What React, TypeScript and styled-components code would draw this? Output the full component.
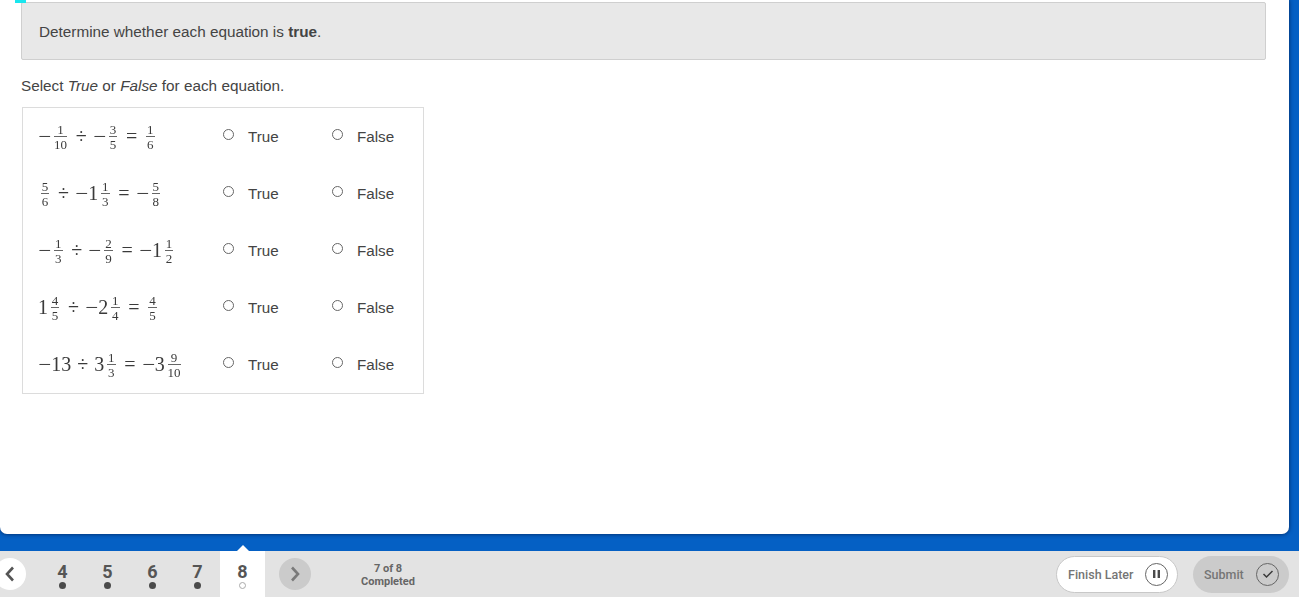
import React from "react";
import styled, { createGlobalStyle } from "styled-components";

const Global = createGlobalStyle`
  html, body { margin: 0; padding: 0; height: 100%; overflow: hidden; }
  body { font-family: "Liberation Sans", Arial, sans-serif; color: #444; background: #0560c4; }
  #root { height: 100%; }
`;

const Page = styled.div`
  width: 1299px;
  height: 597px;
  display: flex;
  flex-direction: column;
  position: relative;
  overflow: hidden;
  background: #0560c4;
`;

const Main = styled.main`
  width: 1289px;
  height: 534px;
  box-sizing: border-box;
  padding: 2px 23px 0 21px;
  background: #fff;
  border-radius: 0 0 7px 7px;
  box-shadow: 0 0 4px rgba(0, 25, 70, 0.85);
  flex: none;
`;

const FocusMark = styled.div`
  position: absolute;
  left: 15px;
  top: 0;
  width: 11px;
  height: 3px;
  background: #19e6ee;
`;

const Prompt = styled.div`
  height: 58px;
  box-sizing: border-box;
  display: flex;
  align-items: center;
  padding: 1px 17px 0;
  background: #e8e8e8;
  border: 1px solid #cfcfcf;
  border-radius: 2px;
  font-size: 15.3px;
  color: #444;
  white-space: pre;
`;

const Instruction = styled.p`
  margin: 16px 0 12px;
  height: 19px;
  line-height: 19px;
  font-size: 15.3px;
  color: #444;
`;

const Table = styled.div`
  margin-left: 1px;
  width: 402px;
  box-sizing: border-box;
  border: 1px solid #dcdcdc;
`;

const Row = styled.div`
  display: grid;
  grid-template-columns: 200px 109px 1fr;
  height: 57px;
  align-items: center;
`;

const MathCell = styled.div`
  padding-left: 15px;
  display: flex;
  align-items: center;
  font-family: "Liberation Serif", "Times New Roman", serif;
  font-size: 20px;
  color: #3a3a3a;
  white-space: pre;
  will-change: opacity;
`;

const Minus = styled.span`
  display: inline-block;
  transform: scaleX(1.15);
  margin: 0 1px;
`;

const Op = styled.span`
  margin: 0 6px;
`;

const Frac = styled.span`
  display: inline-flex;
  flex-direction: column;
  align-items: center;
  font-size: 13px;
  line-height: 13px;
  margin: 0 2.75px;
  min-width: 8px;
`;

const Num = styled.span`
  display: block;
  padding: 0 1px 0;
  border-bottom: 1px solid #666;
  text-align: center;
  align-self: stretch;
`;

const Den = styled.span`
  display: block;
  padding-top: 1px;
  text-align: center;
`;

const Choice = styled.label`
  display: flex;
  align-items: center;
  font-size: 15.2px;
  color: #444;
`;

const Radio = styled.span`
  width: 11px;
  height: 11px;
  box-sizing: border-box;
  border: 1px solid #666;
  border-radius: 50%;
  background: #fff;
  margin: -5px 14px 0 0;
  flex: none;
`;

const Footer = styled.footer`
  position: absolute;
  left: 0;
  right: 0;
  bottom: 0;
  height: 46px;
  background: #e3e3e3;
  display: flex;
  align-items: center;
  font-family: Roboto, Arial, sans-serif;
`;

const CircleBtn = styled.button<{ $active?: boolean }>`
  width: 32px;
  height: 32px;
  flex: none;
  padding: 0;
  border: 0;
  border-radius: 50%;
  display: flex;
  align-items: center;
  justify-content: center;
  background: ${(p) => (p.$active ? "#fff" : "#cbcbcb")};
  color: ${(p) => (p.$active ? "#555" : "#7a7a7a")};
`;

const PrevBtn = styled(CircleBtn)`
  margin-left: -6px;
  margin-right: 14px;
`;

const NextBtn = styled(CircleBtn)`
  margin-left: 14px;
`;

const Tab = styled.div<{ $current?: boolean }>`
  width: 45px;
  height: 46px;
  flex: none;
  display: flex;
  flex-direction: column;
  align-items: center;
  padding-top: 11px;
  box-sizing: border-box;
  position: relative;
  background: ${(p) => (p.$current ? "#fff" : "transparent")};
  font-size: 18px;
  line-height: 20px;
  font-weight: 700;
  color: #555;
`;

const Notch = styled.span`
  position: absolute;
  top: -6px;
  left: 50%;
  margin-left: -6px;
  width: 0;
  height: 0;
  border-left: 6px solid transparent;
  border-right: 6px solid transparent;
  border-bottom: 6px solid #fff;
`;

const Dot = styled.span<{ $empty?: boolean }>`
  width: 7px;
  height: 7px;
  box-sizing: border-box;
  border-radius: 50%;
  background: ${(p) => (p.$empty ? "#fff" : "#4a4a4a")};
  border: ${(p) => (p.$empty ? "1px solid #aaa" : "0")};
`;

const Progress = styled.div`
  width: 70px;
  margin: 2px 0 0 42px;
  text-align: center;
  font-size: 11px;
  line-height: 13px;
  font-weight: 700;
  color: #666;
`;

const Actions = styled.div`
  margin-left: auto;
  margin-right: 10px;
  display: flex;
  gap: 15px;
  align-items: center;
`;

const Pill = styled.button<{ $submit?: boolean }>`
  height: 37px;
  box-sizing: border-box;
  border-radius: 19px;
  display: flex;
  align-items: center;
  justify-content: space-between;
  font-family: Roboto, Arial, sans-serif;
  font-size: 12.5px;
  font-weight: 500;
  color: #757575;
  padding: ${(p) => (p.$submit ? "0 10px 0 11px" : "0 9px 0 11px")};
  width: ${(p) => (p.$submit ? "96px" : "122px")};
  background: ${(p) => (p.$submit ? "#cbcbcb" : "#fff")};
  border: ${(p) => (p.$submit ? "0" : "1px solid #c8c8c8")};
`;

const PillLabel = styled.span`
  padding-top: 1px;
`;

const PillIcon = styled.span`
  width: 23px;
  height: 23px;
  box-sizing: border-box;
  border: 1px solid #666;
  border-radius: 50%;
  display: flex;
  align-items: center;
  justify-content: center;
`;

const F = ({ n, d }: { n: string; d: string }) => (
  <Frac>
    <Num>{n}</Num>
    <Den>{d}</Den>
  </Frac>
);

const M = () => <Minus>−</Minus>;

const equations: React.ReactNode[] = [
  <><M /><F n="1" d="10" /><Op>÷</Op><M /><F n="3" d="5" /><Op>=</Op><F n="1" d="6" /></>,
  <><F n="5" d="6" /><Op>÷</Op><M />1<F n="1" d="3" /><Op>=</Op><M /><F n="5" d="8" /></>,
  <><M /><F n="1" d="3" /><Op>÷</Op><M /><F n="2" d="9" /><Op>=</Op><M />1<F n="1" d="2" /></>,
  <>1<F n="4" d="5" /><Op>÷</Op><M />2<F n="1" d="4" /><Op>=</Op><F n="4" d="5" /></>,
  <><M />13<Op>÷</Op>3<F n="1" d="3" /><Op>=</Op><M />3<F n="9" d="10" /></>,
];

export default function App() {
  return (
    <Page>
      <Global />
      <Main>
        <Prompt>Determine whether each equation is <b>true</b>.</Prompt>
        <Instruction>Select <i>True</i> or <i>False</i> for each equation.</Instruction>
        <Table>
          {equations.map((eq, i) => (
            <Row key={i}>
              <MathCell>{eq}</MathCell>
              <Choice><Radio />True</Choice>
              <Choice><Radio />False</Choice>
            </Row>
          ))}
        </Table>
      </Main>
      <FocusMark />
      <Footer>
        <PrevBtn $active aria-label="Previous">
          <svg width="14" height="18" viewBox="0 0 14 18" fill="none" stroke="currentColor" strokeWidth="2.6">
            <path d="M10 2.5 L4 9 L10 15.5" />
          </svg>
        </PrevBtn>
        {[4, 5, 6, 7].map((n) => (
          <Tab key={n}>{n}<Dot /></Tab>
        ))}
        <Tab $current><Notch />8<Dot $empty /></Tab>
        <NextBtn aria-label="Next">
          <svg width="14" height="18" viewBox="0 0 14 18" fill="none" stroke="currentColor" strokeWidth="2.6">
            <path d="M4 2.5 L10 9 L4 15.5" />
          </svg>
        </NextBtn>
        <Progress>7 of 8<br />Completed</Progress>
        <Actions>
          <Pill>
            <PillLabel>Finish Later</PillLabel>
            <PillIcon>
              <svg width="9" height="10" viewBox="0 0 9 10" fill="#4a4a4a">
                <rect x="1" y="1" width="2.4" height="8" />
                <rect x="5.6" y="1" width="2.4" height="8" />
              </svg>
            </PillIcon>
          </Pill>
          <Pill $submit>
            <PillLabel>Submit</PillLabel>
            <PillIcon>
              <svg width="12" height="10" viewBox="0 0 12 10" fill="none" stroke="#3a3a3a" strokeWidth="1.5">
                <path d="M1.5 5 L4.5 8 L10.5 2" />
              </svg>
            </PillIcon>
          </Pill>
        </Actions>
      </Footer>
    </Page>
  );
}
